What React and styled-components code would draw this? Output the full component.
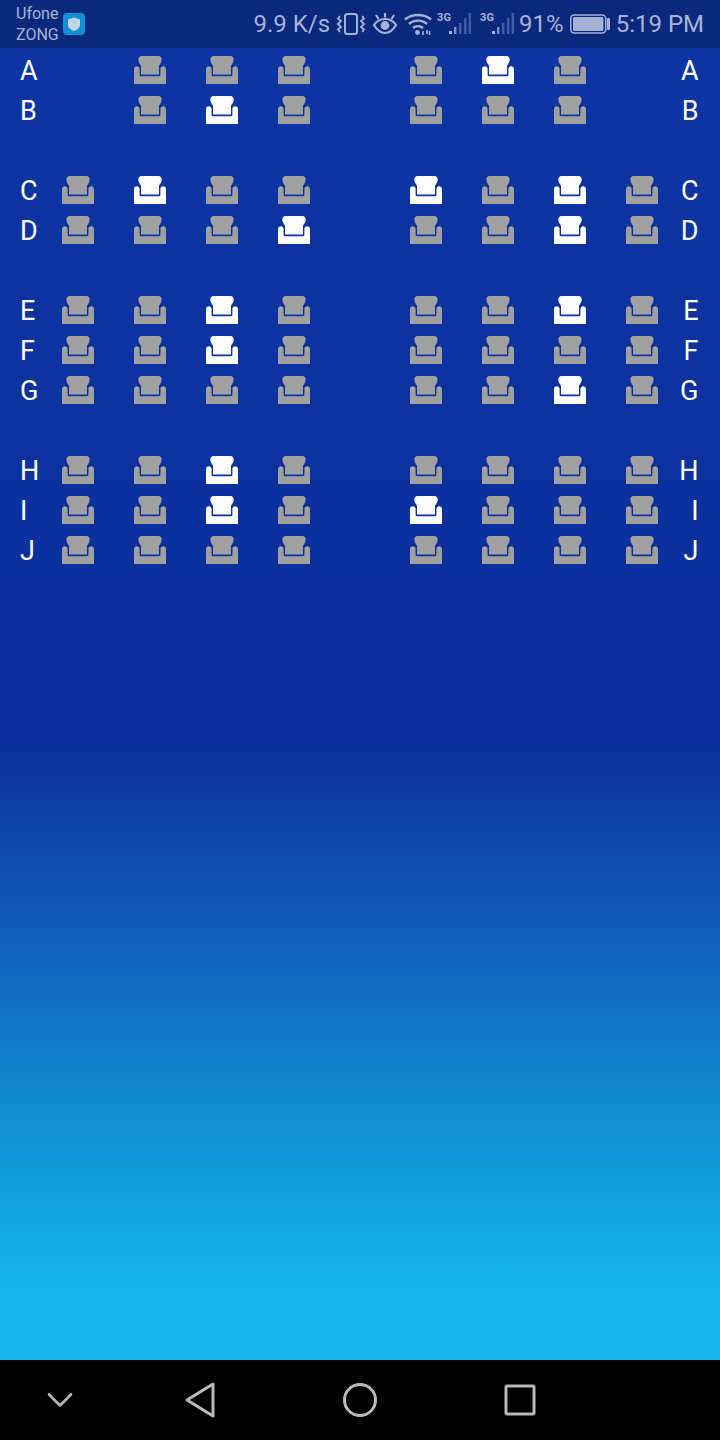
import React from "react";
import styled, { createGlobalStyle } from "styled-components";

const Global = createGlobalStyle`
  html, body { margin: 0; padding: 0; background: #000; }
  #root { width: 720px; height: 1440px; }
`;

const Page = styled.div`
  width: 720px;
  height: 1440px;
  display: flex;
  flex-direction: column;
  overflow: hidden;
  font-family: Roboto, "Liberation Sans", sans-serif;
`;

const StatusBar = styled.header`
  height: 48px;
  flex: none;
  display: flex;
  align-items: center;
  padding: 0 16px;
  background: #0a297d;
  color: #a6b3d6;
`;

const Carriers = styled.div`
  display: flex;
  flex-direction: column;
  font-size: 16px;
  line-height: 21px;
  margin-right: 4px;
`;

const StatusRight = styled.div`
  margin-left: auto;
  display: flex;
  align-items: center;
  height: 48px;
`;

const StatusText = styled.span`
  font-size: ${(p) => p.$size || 24}px;
  line-height: 48px;
  margin-left: ${(p) => p.$left || 0}px;
`;

const StatusIcon = styled.svg`
  flex: none;
  display: block;
  margin-left: ${(p) => p.$left || 0}px;
`;

const SignalBox = styled.div`
  position: relative;
  width: 36px;
  height: 24px;
  margin-left: ${(p) => p.$left || 0}px;
`;

const NetLabel = styled.span`
  position: absolute;
  left: 0;
  top: 0;
  font-size: 11px;
  line-height: 12px;
  font-weight: 700;
  color: #a6b3d6;
`;

const Main = styled.main`
  flex: 1;
  padding-top: 2px;
  background: linear-gradient(
    180deg,
    #0c35a3 0%,
    #0b2f9c 53%,
    #1166c0 70%,
    #1196d8 84%,
    #13b7ea 95%,
    #13b7ea 100%
  );
`;

const Block = styled.section`
  margin-bottom: 40px;
`;

const Row = styled.div`
  height: 40px;
  padding: 0 20px;
  display: flex;
  align-items: center;
  color: #fff;
`;

const RowLabel = styled.span`
  width: ${(p) => (p.$end ? 40.5 : 42)}px;
  flex: none;
  font-size: 27px;
  line-height: 40px;
  padding-top: 1px;
  text-align: ${(p) => (p.$end ? "right" : "left")};
`;

const SeatGroup = styled.div`
  display: flex;
  gap: 40px;
`;

const Aisle = styled.div`
  width: 100px;
  flex: none;
`;

const SeatSvg = styled.svg`
  display: block;
  flex: none;
  width: 32px;
  height: 28px;
  color: ${(p) => (p.$taken ? "#ffffff" : "#a0a0a0")};
  visibility: ${(p) => (p.$absent ? "hidden" : "visible")};
  filter: blur(0.35px);
`;

const NavBar = styled.nav`
  height: 80px;
  flex: none;
  background: #000;
  display: flex;
  align-items: center;
  padding-left: 40px;
`;

const NavIcon = styled.svg`
  display: block;
  width: 40px;
  height: 40px;
  margin-left: ${(p) => p.$left || 0}px;
  fill: none;
  stroke: #b9b9b9;
  stroke-width: 3;
  stroke-linejoin: round;
  stroke-linecap: round;
`;

const Seat = ({ state }) => (
  <SeatSvg viewBox="0 0 32 28" $taken={state === 1} $absent={state === 2}>
    <path
      fill="currentColor"
      d="M7.5 0H24.5C26.4 0 27.7 1.4 27.7 3.2C27.7 5.4 26.8 7.4 25.4 9C25.1 9.4 25 9.8 25 10.2V18.4H7V10.2C7 9.8 6.9 9.4 6.6 9C5.2 7.4 4.3 5.4 4.3 3.2C4.3 1.4 5.6 0 7.5 0Z"
    />
    <path
      fill="currentColor"
      d="M2.8 10.2C4.4 10.2 5.6 11.4 5.6 13V19C5.6 19.7 6.1 20.2 6.8 20.2H25.2C25.9 20.2 26.4 19.7 26.4 19V13C26.4 11.4 27.6 10.2 29.2 10.2C30.8 10.2 32 11.4 32 13V28H0V13C0 11.4 1.2 10.2 2.8 10.2Z"
    />
  </SeatSvg>
);

const Signal = ({ left }) => (
  <SignalBox $left={left}>
    <NetLabel>3G</NetLabel>
    <svg width="36" height="24" viewBox="0 0 36 24" style={{ display: "block" }}>
      <rect x="12" y="19" width="3" height="3" fill="#a6b3d6" />
      <rect x="17" y="15" width="2.4" height="7" fill="#a6b3d6" opacity="0.75" />
      <rect x="22" y="11" width="2.4" height="11" fill="#3f5ca8" />
      <rect x="27" y="6" width="2.4" height="16" fill="#3f5ca8" />
      <rect x="31.6" y="1" width="2.4" height="21" fill="#3f5ca8" />
    </svg>
  </SignalBox>
);

const rows = [
  [
    ["A", [2, 0, 0, 0], [0, 1, 0, 2]],
    ["B", [2, 0, 1, 0], [0, 0, 0, 2]],
  ],
  [
    ["C", [0, 1, 0, 0], [1, 0, 1, 0]],
    ["D", [0, 0, 0, 1], [0, 0, 1, 0]],
  ],
  [
    ["E", [0, 0, 1, 0], [0, 0, 1, 0]],
    ["F", [0, 0, 1, 0], [0, 0, 0, 0]],
    ["G", [0, 0, 0, 0], [0, 0, 1, 0]],
  ],
  [
    ["H", [0, 0, 1, 0], [0, 0, 0, 0]],
    ["I", [0, 0, 1, 0], [1, 0, 0, 0]],
    ["J", [0, 0, 0, 0], [0, 0, 0, 0]],
  ],
];

export default function App() {
  return (
    <Page>
      <Global />
      <StatusBar>
        <Carriers>
          <span>Ufone</span>
          <span>ZONG</span>
        </Carriers>
        <StatusIcon width="22" height="22" viewBox="0 0 22 22">
          <rect width="22" height="22" rx="4" fill="#0f8fd6" />
          <path d="M11 4.5L17 6.5V11.5C17 14.8 14.5 17 11 18C7.5 17 5 14.8 5 11.5V6.5Z" fill="#c3d3ea" />
        </StatusIcon>
        <StatusRight>
          <StatusText>9.9 K/s</StatusText>
          <StatusIcon $left={6} width="30" height="24" viewBox="0 0 30 24" fill="none" stroke="#a6b3d6">
            <rect x="9" y="2" width="12" height="20" rx="2.5" strokeWidth="2" />
            <path d="M4 4L2 6.5L5 9L2 12L5 15L2 17.5L4 20M26 4L28 6.5L25 9L28 12L25 15L28 17.5L26 20" strokeWidth="1.8" />
          </StatusIcon>
          <StatusIcon $left={6} width="26" height="24" viewBox="0 0 26 24" fill="none" stroke="#a6b3d6">
            <path d="M2 13C5 8.5 9 7 13 7C17 7 21 8.5 24 13C21 18 17 21 13 21C9 21 5 18 2 13Z" strokeWidth="2.2" />
            <circle cx="13" cy="13.5" r="4.4" fill="#a6b3d6" stroke="none" />
            <path d="M4 3L6.5 7M13 1V5.5M22 3L19.5 7" strokeWidth="2.2" />
          </StatusIcon>
          <StatusIcon $left={6} width="28" height="24" viewBox="0 0 28 24" fill="none" stroke="#a6b3d6" strokeWidth="2.4">
            <path d="M1 7.5C8 1.5 20 1.5 27 7.5" />
            <path d="M5 12C10 7.5 18 7.5 23 12" />
            <path d="M9 16C12 13.5 16 13.5 19 16" />
            <circle cx="13.5" cy="20.5" r="2.4" fill="#a6b3d6" stroke="none" />
            <path d="M19 19V23M23 18V22M25.5 19V23" strokeWidth="1.6" />
          </StatusIcon>
          <Signal left={5} />
          <Signal left={7} />
          <StatusText $left={3}>91%</StatusText>
          <StatusIcon $left={6} width="40" height="20" viewBox="0 0 40 20">
            <rect x="0.75" y="1" width="35" height="18" rx="3.5" fill="none" stroke="#a6b3d6" strokeWidth="1.5" />
            <rect x="3" y="3" width="30.5" height="14" rx="1.5" fill="#a6b3d6" />
            <rect x="37" y="4" width="3" height="12" rx="1" fill="#a6b3d6" />
          </StatusIcon>
          <StatusText $left={6}>5:19 PM</StatusText>
        </StatusRight>
      </StatusBar>
      <Main>
        {rows.map((block, i) => (
          <Block key={i}>
            {block.map(([letter, left, right]) => (
              <Row key={letter}>
                <RowLabel>{letter}</RowLabel>
                <SeatGroup>
                  {left.map((s, k) => (
                    <Seat key={k} state={s} />
                  ))}
                </SeatGroup>
                <Aisle />
                <SeatGroup>
                  {right.map((s, k) => (
                    <Seat key={k} state={s} />
                  ))}
                </SeatGroup>
                <RowLabel $end>{letter}</RowLabel>
              </Row>
            ))}
          </Block>
        ))}
      </Main>
      <NavBar>
        <NavIcon viewBox="0 0 40 40">
          <path d="M9 14.5L20 25.5L31 14.5" strokeWidth="2.6" />
        </NavIcon>
        <NavIcon $left={100} viewBox="0 0 40 40">
          <path d="M33 4V36L7 20Z" />
        </NavIcon>
        <NavIcon $left={120} viewBox="0 0 40 40">
          <circle cx="20" cy="20" r="15.5" />
        </NavIcon>
        <NavIcon $left={120} viewBox="0 0 40 40">
          <rect x="6" y="6" width="28" height="28" rx="1" />
        </NavIcon>
      </NavBar>
    </Page>
  );
}
